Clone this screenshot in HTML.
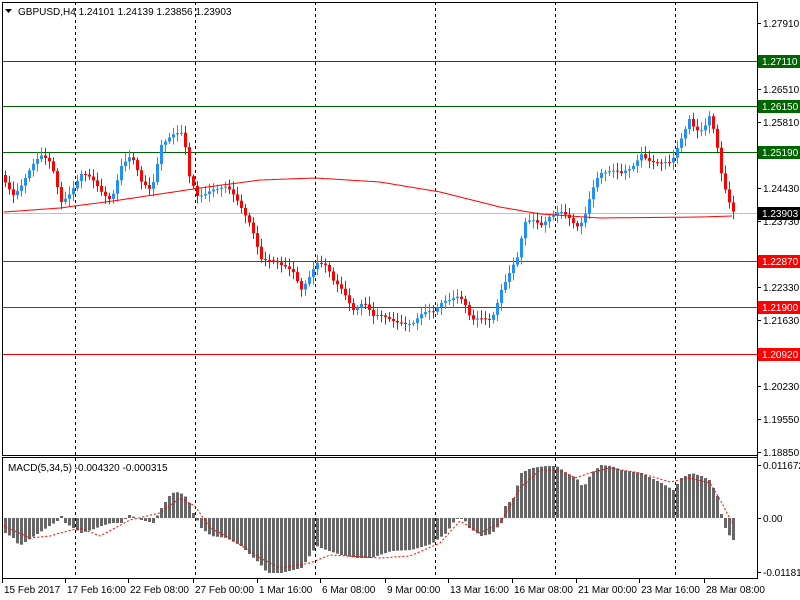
<!DOCTYPE html><html><head><meta charset="utf-8"><style>
body{margin:0;width:800px;height:600px;background:#fff;overflow:hidden;font-family:"Liberation Sans",sans-serif}
svg{display:block}
text{font-family:"Liberation Sans",sans-serif;font-size:10px;fill:#000}
</style></head><body>
<svg id="s" width="800" height="600" xmlns="http://www.w3.org/2000/svg"></svg>
<script>
(function(){
var s=document.getElementById('s'),h='';
function L(x1,y1,x2,y2,c,w,d){h+='<line x1="'+x1+'" y1="'+y1+'" x2="'+x2+'" y2="'+y2+'" stroke="'+c+'" stroke-width="'+(w||1)+'"'+(d?' stroke-dasharray="'+d+'"':'')+'/>';}
function R(x,y,w,hh,c){h+='<rect x="'+x+'" y="'+y+'" width="'+w+'" height="'+hh+'" fill="'+c+'"/>';}
function T(x,y,t,c,a){h+='<text x="'+x+'" y="'+y+'"'+(c?' style="fill:'+c+'"':'')+(a?' text-anchor="'+a+'"':'')+'>'+t+'</text>';}
function interp(pts,x){for(var i=0;i<pts.length-1;i++){if(x<=pts[i+1][0]){var a=pts[i],b=pts[i+1],t=(x-a[0])/(b[0]-a[0]);return a[1]+(b[1]-a[1])*t;}}return pts[pts.length-1][1];}
[75,195,315,435,555,675].forEach(function(x){L(x+.5,2,x+.5,455,'#000',1,'3,3');L(x+.5,458,x+.5,578,'#000',1,'3,3');});
[[61,'#006400'],[106,'#006400'],[152,'#006400'],[261,'#e00'],[307,'#e00'],[354,'#e00']].forEach(function(l){L(2,l[0]+.5,757,l[0]+.5,l[1]);});
L(2,213.5,757,213.5,'#c0c0c0');
var P=[[4,180],[12,190],[20,183],[30,170],[40,160],[50,162],[60,197],[70,190],[80,178],[90,182],[100,190],[110,195],[120,165],[130,160],[140,185],[150,188],[160,140],[170,135],[182,138],[188,180],[196,195],[210,185],[225,190],[240,210],[250,222],[260,255],[270,262],[280,270],[292,272],[300,285],[315,262],[325,270],[332,285],[342,290],[352,305],[362,300],[372,320],[385,320],[400,318],[412,322],[420,318],[432,315],[442,298],[455,292],[462,300],[470,325],[480,322],[490,318],[500,285],[510,268],[518,258],[522,228],[532,222],[540,222],[548,212],[558,210],[566,220],[575,232],[582,222],[590,188],[598,168],[610,172],[620,178],[630,170],[640,150],[650,158],[660,165],[670,168],[678,145],[688,115],[694,125],[702,128],[708,118],[714,140],[720,178],[726,200],[732,210]];
var prev=interp(P,0);
for(var x=4;x<=732;x+=4){var cl=interp(P,x)+Math.sin(x*1.7)*5,op=prev;prev=cl;var bt=Math.min(op,cl),bb=Math.max(op,cl);if(bb-bt<1)bb=bt+1;
var wt=bt-2-Math.abs(Math.sin(x*0.9))*6,wb=bb+2+Math.abs(Math.cos(x*1.3))*6;var col=cl<op?'#1e90ff':'#ff0000';
L(x+1.5,wt,x+1.5,wb,col);R(x,bt,3,bb-bt,col);}
var M=[[4,212],[60,208],[120,200],[200,188],[260,180],[315,178],[380,182],[440,192],[500,207],[540,214],[600,218],[700,217],[732,216]];
var d='M';for(var x=4;x<=732;x+=4){d+=x+','+interp(M,x).toFixed(1)+' ';}
h+='<path d="'+d+'" fill="none" stroke="#ff0000" stroke-width="1"/>';
var Hh=[[4,-15],[12,-20],[18,-28],[30,-20],[45,-10],[56,-3],[60,2],[64,-5],[80,-15],[90,-12],[100,-8],[110,-5],[120,-5],[128,3],[140,-2],[152,-5],[160,10],[170,25],[178,26],[186,20],[192,5],[200,-10],[210,-18],[225,-20],[240,-28],[250,-38],[258,-45],[266,-55],[280,-55],[300,-50],[315,-28],[325,-32],[340,-37],[355,-40],[370,-40],[390,-33],[410,-32],[430,-26],[445,-15],[455,0],[462,0],[468,-10],[480,-18],[490,-16],[500,-5],[504,12],[512,20],[520,45],[530,50],[545,52],[555,52],[565,45],[575,40],[582,30],[590,45],[600,53],[610,52],[620,48],[640,45],[660,35],[672,28],[680,40],[690,45],[700,42],[708,38],[716,22],[722,-5],[726,-15],[732,-22]];
var S=[[4,-8],[30,-20],[50,-18],[60,-15],[80,-10],[100,-18],[130,-2],[160,5],[180,20],[195,12],[210,-10],[230,-20],[260,-40],[280,-50],[310,-45],[330,-37],[380,-40],[410,-38],[440,-25],[460,-3],[480,-15],[500,-5],[520,30],[540,48],[560,48],[575,40],[590,45],[610,50],[640,45],[670,36],[690,40],[710,35],[722,15],[732,-5]];
for(var x=4;x<=732;x+=4){var v=interp(Hh,x);if(v>=0)R(x,518-v,3,Math.max(v,1),'#666');else R(x,518,3,-v,'#666');}
var d2='M';for(var x=4;x<=732;x+=2){d2+=x+','+(518-interp(S,x)).toFixed(1)+' ';}
h+='<path d="'+d2+'" fill="none" stroke="#ff0000" stroke-width="1" stroke-dasharray="2,2"/>';
R(2,2,755,1,'#000');R(2,2,1,454,'#000');R(2,455,756,1,'#000');R(2,457,756,1,'#000');R(2,457,1,122,'#000');R(2,578,756,1,'#000');R(757,2,1,577,'#000');
h+='<polygon points="5,9 12,9 8.5,13" fill="#000"/>';
T(18,15,'GBPUSD,H4  1.24101 1.24139 1.23856 1.23903');
T(8,471,'MACD(5,34,5) -0.004320 -0.000315');
[[23,'1.27910'],[89,'1.26510'],[122,'1.25810'],[188,'1.24430'],[221,'1.23730'],[287,'1.22330'],[320,'1.21630'],[386,'1.20230'],[419,'1.19550'],[452,'1.18850']].forEach(function(a){L(757,a[0]+.5,761,a[0]+.5,'#000');T(763,a[0]+4,a[1]);});
[[61,'1.27110','#006400'],[106,'1.26150','#006400'],[152,'1.25190','#006400'],[213,'1.23903','#000'],[261,'1.22870','#f00'],[307,'1.21900','#f00'],[354,'1.20920','#f00']].forEach(function(a){R(758,a[0]-6,42,13,a[2]);T(762,a[0]+4,a[1],'#fff');});
[[465,'0.011672'],[518,'0.00'],[572,'-0.011812']].forEach(function(a){L(757,a[0]+.5,761,a[0]+.5,'#000');T(763,a[0]+4,a[1]);});
[[4,'15 Feb 2017'],[67,'17 Feb 16:00'],[130,'22 Feb 08:00'],[195,'27 Feb 00:00'],[259,'1 Mar 16:00'],[322,'6 Mar 08:00'],[387,'9 Mar 00:00'],[450,'13 Mar 16:00'],[514,'16 Mar 08:00'],[578,'21 Mar 00:00'],[641,'23 Mar 16:00'],[706,'28 Mar 08:00']].forEach(function(a){L(a[0]-1.5,579,a[0]-1.5,583,'#000');T(a[0],593,a[1]);});
s.innerHTML=h;
})();
</script>
</body></html>
